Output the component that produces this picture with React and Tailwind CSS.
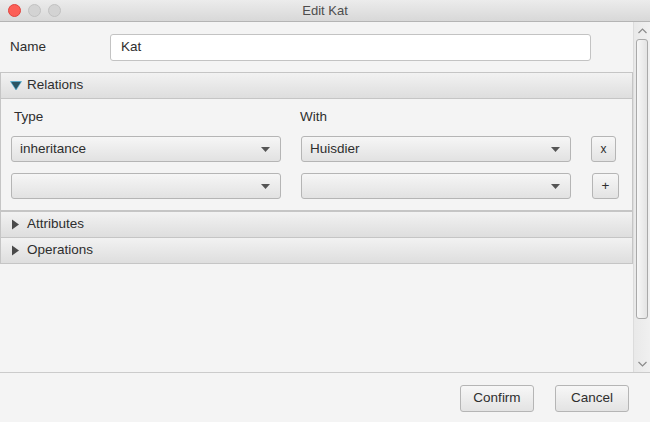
import React from "react";

const Caret = () => (
  <svg width="9" height="5" viewBox="0 0 9 5" className="shrink-0">
    <path d="M0 0h9L4.5 5z" fill="#555" />
  </svg>
);

const Combo = ({ value }) => (
  <div className="w-[270px] h-[26px] flex items-center justify-between pl-[8px] pr-[10px] rounded-[3px] border border-[#b5b5b5] bg-gradient-to-b from-[#f6f6f6] to-[#e2e2e2] text-[#2e2e2e]">
    <span>{value}</span>
    <Caret />
  </div>
);

const Btn = ({ children, className = "" }) => (
  <div
    className={`h-[26px] flex items-center justify-center rounded-[3px] border border-[#b5b5b5] bg-gradient-to-b from-[#f7f7f7] to-[#e3e3e3] text-[#2e2e2e] ${className}`}
  >
    {children}
  </div>
);

const PaneHeader = ({ title, open }) => (
  <div className="h-[27px] flex items-center pl-[9px] border border-[#c5c5c5] bg-gradient-to-b from-[#f2f2f2] to-[#dedede] text-[#2e2e2e]">
    {open ? (
      <svg width="12" height="10" viewBox="0 0 12 10" className="mr-[5px]">
        <path d="M0.5 0.5h11L6 9z" fill="#2b5563" stroke="#3fb2dd" strokeWidth="1" strokeOpacity="0.6" />
      </svg>
    ) : (
      <svg width="9" height="11" viewBox="0 0 9 11" className="ml-[2px] mr-[6px]">
        <path d="M0 0.5L7 5.5L0 10.5z" fill="#4a4a4a" />
      </svg>
    )}
    <span>{title}</span>
  </div>
);

export default function App() {
  return (
    <div className="w-[650px] h-[422px] flex flex-col bg-[#f4f4f4] text-[13.5px] font-['Liberation_Sans',Arial,sans-serif] overflow-hidden">
      {/* title bar */}
      <div className="relative h-[22px] shrink-0 flex items-center justify-center border-b border-[#b4b4b4] bg-gradient-to-b from-[#ececec] to-[#d8d8d8] text-[#4d4d4d] text-[13px]">
        <div className="absolute left-[8px] top-[4px] flex gap-[7px]">
          <span className="w-[13px] h-[13px] rounded-full bg-[#fc5f57] border border-[#e0443e]" />
          <span className="w-[13px] h-[13px] rounded-full bg-[#d3d3d3] border border-[#c1c1c1]" />
          <span className="w-[13px] h-[13px] rounded-full bg-[#d3d3d3] border border-[#c1c1c1]" />
        </div>
        <span>Edit Kat</span>
      </div>

      {/* body */}
      <div className="h-[350px] shrink-0 flex">
        <div className="w-[633px] flex flex-col">
          <div className="h-[50px] flex items-center pl-[10px] pt-[1px] text-[#2e2e2e]">
            <span className="w-[100px]">Name</span>
            <div className="w-[481px] h-[27px] flex items-center pl-[10px] rounded-[3px] border border-[#c3c3c3] bg-white">
              Kat
            </div>
          </div>

          <PaneHeader title="Relations" open />
          <div className="flex flex-col border-x border-b border-[#c5c5c5] pt-[10px] pb-[11px] pl-[10px] text-[#2e2e2e]">
            <div className="h-[16px] flex items-center">
              <span className="w-[289px] pl-[3px]">Type</span>
              <span>With</span>
            </div>
            <div className="flex flex-col gap-[11px] mt-[11px]">
              <div className="flex items-center gap-[20px]">
                <Combo value="inheritance" />
                <Combo value="Huisdier" />
                <Btn className="w-[25px] text-[12px]">x</Btn>
              </div>
              <div className="flex items-center gap-[20px]">
                <Combo value="" />
                <Combo value="" />
                <Btn className="w-[27px] ml-[1px] text-[#1f2a5a]">+</Btn>
              </div>
            </div>
          </div>
          <PaneHeader title="Attributes" />
          <div className="-mt-[1px]">
            <PaneHeader title="Operations" />
          </div>
        </div>

        {/* scrollbar */}
        <div className="w-[17px] flex flex-col items-center border-l border-[#dcdcdc] bg-gradient-to-r from-[#e9e9e9] to-[#f0f0f0]">
          <svg width="9" height="6" viewBox="0 0 9 6" className="mt-[6px]">
            <path d="M0.5 5L4.5 1L8.5 5" fill="none" stroke="#8a8a8a" strokeWidth="1.2" />
          </svg>
          <div className="w-[12px] h-[280px] mt-[5px] rounded-[3px] border border-[#a9a9a9] bg-gradient-to-r from-[#f7f7f7] to-[#e3e3e3]" />
          <div className="flex-1" />
          <svg width="9" height="6" viewBox="0 0 9 6" className="mb-[5px]">
            <path d="M0.5 1L4.5 5L8.5 1" fill="none" stroke="#8a8a8a" strokeWidth="1.2" />
          </svg>
        </div>
      </div>

      {/* footer */}
      <div className="flex-1 flex items-start justify-end gap-[21px] pt-[12px] pr-[21px] border-t border-[#cbcbcb]">
        <Btn className="w-[74px] h-[27px]">Confirm</Btn>
        <Btn className="w-[74px] h-[27px]">Cancel</Btn>
      </div>
    </div>
  );
}
